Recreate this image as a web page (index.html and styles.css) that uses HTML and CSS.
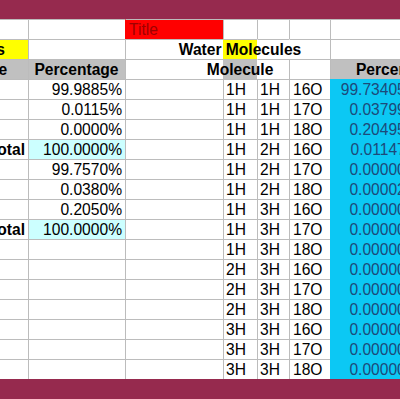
FILE: index.html
```html
<!DOCTYPE html>
<html lang="en">
<head>
<meta charset="utf-8">
<title>Water Molecules</title>
<link rel="stylesheet" href="styles.css">
</head>
<body>
<div class="page">
  <div class="bar"></div>
  <div class="sheet">
    <!-- row 1 -->
    <div class="c"></div><div class="c"></div><div class="c red">Title</div><div class="c"></div><div class="c"></div><div class="c"></div><div class="c"></div>
    <!-- row 2 -->
    <div class="c r b yellow cut">Isotope Abundances</div><div class="c"></div><div class="c"></div><div class="c ctr b yellow nl">Water Molecules</div><div class="c nl"></div><div class="c nl"></div><div class="c"></div>
    <!-- row 3 -->
    <div class="c ctr b gray">Isotope</div><div class="c ctr b gray">Percentage</div><div class="c"></div><div class="c ctr b gray nl">Molecule</div><div class="c nl"></div><div class="c"></div><div class="c ctr b gray">Percentage</div>
    <!-- row 4 -->
    <div class="c"></div><div class="c r">99.9885%</div><div class="c"></div><div class="c">1H</div><div class="c">1H</div><div class="c f">16O</div><div class="c r cyan">99.7340572093%</div>
    <!-- row 5 -->
    <div class="c"></div><div class="c r">0.0115%</div><div class="c"></div><div class="c">1H</div><div class="c">1H</div><div class="c f">17O</div><div class="c r cyan">0.0379912605%</div>
    <!-- row 6 -->
    <div class="c"></div><div class="c r">0.0000%</div><div class="c"></div><div class="c">1H</div><div class="c">1H</div><div class="c f">18O</div><div class="c r cyan">0.2049528527%</div>
    <!-- row 7 -->
    <div class="c r b">Total</div><div class="c r lcyan">100.0000%</div><div class="c"></div><div class="c">1H</div><div class="c">2H</div><div class="c f">16O</div><div class="c r cyan">0.0114707357%</div>
    <!-- row 8 -->
    <div class="c"></div><div class="c r">99.7570%</div><div class="c"></div><div class="c">1H</div><div class="c">2H</div><div class="c f">17O</div><div class="c r cyan">0.0000043695%</div>
    <!-- row 9 -->
    <div class="c"></div><div class="c r">0.0380%</div><div class="c"></div><div class="c">1H</div><div class="c">2H</div><div class="c f">18O</div><div class="c r cyan">0.0000235723%</div>
    <!-- row 10 -->
    <div class="c"></div><div class="c r">0.2050%</div><div class="c"></div><div class="c">1H</div><div class="c">3H</div><div class="c f">16O</div><div class="c r cyan">0.0000000000%</div>
    <!-- row 11 -->
    <div class="c r b">Total</div><div class="c r lcyan">100.0000%</div><div class="c"></div><div class="c">1H</div><div class="c">3H</div><div class="c f">17O</div><div class="c r cyan">0.0000000000%</div>
    <!-- row 12 -->
    <div class="c"></div><div class="c"></div><div class="c"></div><div class="c">1H</div><div class="c">3H</div><div class="c f">18O</div><div class="c r cyan">0.0000000000%</div>
    <!-- row 13 -->
    <div class="c"></div><div class="c"></div><div class="c"></div><div class="c">2H</div><div class="c">3H</div><div class="c f">16O</div><div class="c r cyan">0.0000000000%</div>
    <!-- row 14 -->
    <div class="c"></div><div class="c"></div><div class="c"></div><div class="c">2H</div><div class="c">3H</div><div class="c f">17O</div><div class="c r cyan">0.0000000000%</div>
    <!-- row 15 -->
    <div class="c"></div><div class="c"></div><div class="c"></div><div class="c">2H</div><div class="c">3H</div><div class="c f">18O</div><div class="c r cyan">0.0000000000%</div>
    <!-- row 16 -->
    <div class="c"></div><div class="c"></div><div class="c"></div><div class="c">3H</div><div class="c">3H</div><div class="c f">16O</div><div class="c r cyan">0.0000000000%</div>
    <!-- row 17 -->
    <div class="c"></div><div class="c"></div><div class="c"></div><div class="c">3H</div><div class="c">3H</div><div class="c f">17O</div><div class="c r cyan">0.0000000000%</div>
    <!-- row 18 -->
    <div class="c"></div><div class="c"></div><div class="c"></div><div class="c">3H</div><div class="c">3H</div><div class="c f">18O</div><div class="c r cyan">0.0000000000%</div>
  </div>
  <div class="bar bar-bottom"></div>
</div>
</body>
</html>
```
FILE: styles.css
```css
html, body {
  margin: 0;
  padding: 0;
  overflow: hidden;
  background: #ffffff;
}

.page {
  width: 400px;
  height: 399px;
  display: flex;
  flex-direction: column;
  overflow: hidden;
  font-family: "Liberation Sans", Arial, sans-serif;
  font-size: 15.6px;
  color: #000000;
}

.bar {
  flex: none;
  height: 19px;
  background: #962a4e;
}

.bar-bottom {
  flex: 1 1 auto;
}

.sheet {
  flex: none;
  display: grid;
  grid-template-columns: 97px 97px 98px 34px 32px 41px 136px;
  grid-auto-rows: 20px;
  width: 535px;
  margin-left: -69px;
}

.c {
  box-sizing: border-box;
  display: flex;
  justify-content: flex-start;
  border-left: 1px solid #bcbcbc;
  border-top: 1px solid #bcbcbc;
  padding: 0 3px 0 2px;
  line-height: 19px;
  white-space: nowrap;
  min-width: 0;
}

.r { justify-content: flex-end; }
.ctr { justify-content: center; }
.b { font-weight: bold; }
.f { padding-left: 3px; }
.nl { border-left-color: transparent; }
.cut { padding-right: 23px; }

.red {
  background: #ff0000;
  color: #9e0000;
  border-left-color: transparent;
  padding-left: 3px;
}

.yellow { background: #ffff00; }
.gray { background: #c0c0c0; }
.lcyan { background: #ccffff; }

.cyan {
  background: #0cc8f4;
  color: #1d4a7a;
  border-color: transparent;
}
```
